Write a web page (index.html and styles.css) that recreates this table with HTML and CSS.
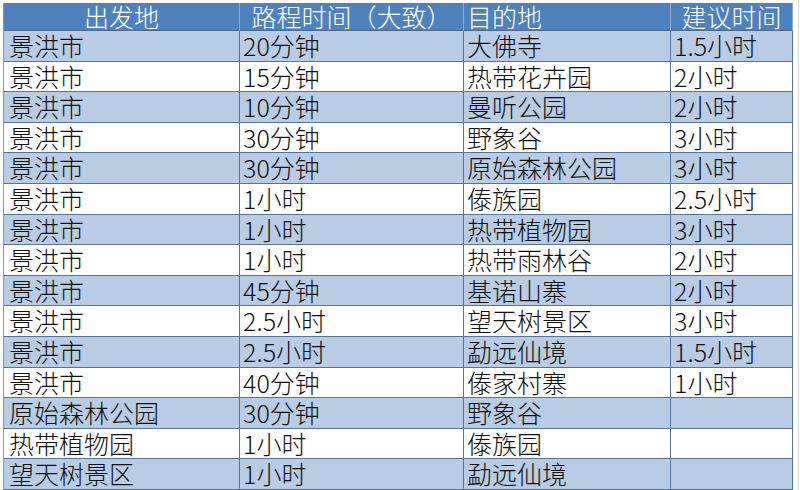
FILE: index.html
```html
<!DOCTYPE html>
<html lang="zh-CN">
<head>
<meta charset="utf-8">
<link rel="stylesheet" href="styles.css">
</head>
<body>
<div class="sheet">
  <div class="grid">
    <div class="c h center">出发地</div>
    <div class="c h center">路程时间（大致）</div>
    <div class="c h">目的地</div>
    <div class="c h center">建议时间</div>

    <div class="c a first">景洪市</div><div class="c a">20分钟</div><div class="c a">大佛寺</div><div class="c a">1.5小时</div>
    <div class="c first">景洪市</div><div class="c">15分钟</div><div class="c">热带花卉园</div><div class="c">2小时</div>
    <div class="c a first">景洪市</div><div class="c a">10分钟</div><div class="c a">曼听公园</div><div class="c a">2小时</div>
    <div class="c first">景洪市</div><div class="c">30分钟</div><div class="c">野象谷</div><div class="c">3小时</div>
    <div class="c a first">景洪市</div><div class="c a">30分钟</div><div class="c a">原始森林公园</div><div class="c a">3小时</div>
    <div class="c first">景洪市</div><div class="c">1小时</div><div class="c">傣族园</div><div class="c">2.5小时</div>
    <div class="c a first">景洪市</div><div class="c a">1小时</div><div class="c a">热带植物园</div><div class="c a">3小时</div>
    <div class="c first">景洪市</div><div class="c">1小时</div><div class="c">热带雨林谷</div><div class="c">2小时</div>
    <div class="c a first">景洪市</div><div class="c a">45分钟</div><div class="c a">基诺山寨</div><div class="c a">2小时</div>
    <div class="c first">景洪市</div><div class="c">2.5小时</div><div class="c">望天树景区</div><div class="c">3小时</div>
    <div class="c a first">景洪市</div><div class="c a">2.5小时</div><div class="c a">勐远仙境</div><div class="c a">1.5小时</div>
    <div class="c first">景洪市</div><div class="c">40分钟</div><div class="c">傣家村寨</div><div class="c">1小时</div>
    <div class="c a first">原始森林公园</div><div class="c a">30分钟</div><div class="c a">野象谷</div><div class="c a"></div>
    <div class="c first">热带植物园</div><div class="c">1小时</div><div class="c">傣族园</div><div class="c"></div>
    <div class="c a first">望天树景区</div><div class="c a">1小时</div><div class="c a">勐远仙境</div><div class="c a"></div>
  </div>
</div>
</body>
</html>
```
FILE: styles.css
```css
html, body {
  margin: 0;
  padding: 0;
  background: #ffffff;
}
body {
  width: 800px;
  height: 490px;
  overflow: hidden;
  font-family: "Noto Sans CJK SC", "Noto Sans", sans-serif;
}
.sheet {
  padding: 3px 0 0 3px;
  background:
    linear-gradient(#d9d9d9, #d9d9d9) 798px 0 / 1px 100% no-repeat,
    #ffffff;
  height: 490px;
  box-sizing: border-box;
}
.grid {
  display: grid;
  grid-template-columns: 236px 224px 207px 122px;
  grid-template-rows: 28px repeat(15, 30.6px);
  width: 789px;
  border-left: 1px solid #7f98bb;
  box-sizing: border-box;
}
.c {
  box-sizing: border-box;
  border-right: 1.5px solid #55739c;
  border-bottom: 1.5px solid #55739c;
  font-size: 25px;
  font-weight: 300;
  line-height: 29px;
  padding-left: 3px;
  color: #111111;
  white-space: nowrap;
  background: #ffffff;
}
.c.a {
  background: #b8cce4;
}
.c.first {
  padding-left: 5px;
}
.c.h {
  background: #4f81bd;
  color: #ffffff;
  line-height: 26px;
  padding-top: 0;
  border-right: 1px solid #8eaad4;
  border-bottom: 1.5px solid #4a6891;
}
.c.center {
  text-align: center;
  padding-left: 0;
}
```
